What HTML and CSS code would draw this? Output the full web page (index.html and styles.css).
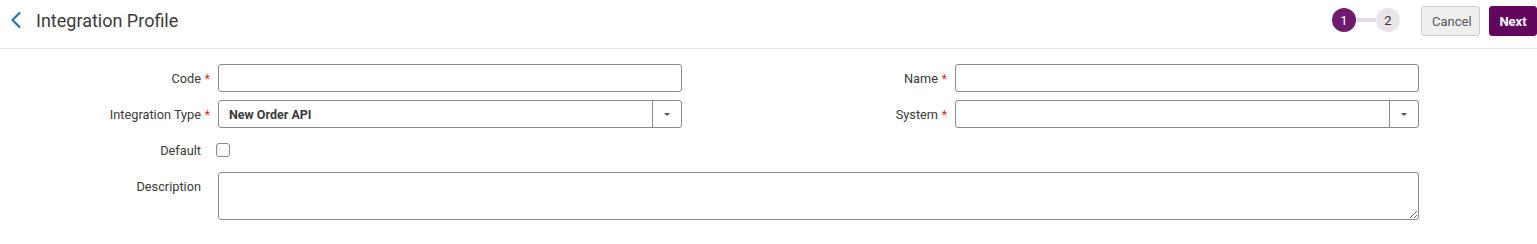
FILE: index.html
```html
<!DOCTYPE html>
<html lang="en">
<head>
<meta charset="utf-8">
<title>Integration Profile</title>
<link rel="stylesheet" href="styles.css">
</head>
<body>
<header class="topbar">
  <div class="title-group">
    <button class="back-btn" aria-label="Back">
      <svg width="12" height="18" viewBox="0 0 12 18"><path d="M9.5 2 L2.5 9 L9.5 16" fill="none" stroke="#1f78b4" stroke-width="2.2" stroke-linecap="round" stroke-linejoin="round"/></svg>
    </button>
    <h1 class="title">Integration Profile</h1>
  </div>
  <div class="actions">
    <div class="stepper">
      <span class="step step-active">1</span>
      <span class="step-line"></span>
      <span class="step">2</span>
    </div>
    <button class="btn btn-cancel">Cancel</button>
    <button class="btn btn-next">Next</button>
  </div>
</header>
<form class="form">
  <label class="lbl">Code<span class="req">*</span></label>
  <input class="inp" type="text">
  <label class="lbl">Name<span class="req">*</span></label>
  <input class="inp" type="text">

  <label class="lbl">Integration Type<span class="req">*</span></label>
  <div class="select"><span class="select-val">New Order API</span><span class="select-btn"><span class="caret"></span></span></div>
  <label class="lbl">System<span class="req">*</span></label>
  <div class="select"><span class="select-val"></span><span class="select-btn"><span class="caret"></span></span></div>

  <label class="lbl">Default<span class="req"></span></label>
  <div class="check-cell"><span class="checkbox"></span></div>
  <div class="spacer"></div>
  <div class="spacer"></div>

  <label class="lbl lbl-top">Description<span class="req"></span></label>
  <textarea class="txt"></textarea>
</form>
</body>
</html>
```
FILE: styles.css
```css
* { box-sizing: border-box; }
html, body { margin: 0; padding: 0; background: #fff; }
body { font-family: Roboto, "Noto Sans", Arial, sans-serif; color: #333; width: 1537px; }

.topbar {
  height: 49px;
  border-bottom: 1px solid #e4e4e4;
  display: flex;
  align-items: flex-start;
  justify-content: space-between;
}
.title-group { display: flex; align-items: center; height: 40px; padding-left: 8px; }
.back-btn { border: 0; background: none; padding: 0; width: 16px; height: 20px; display: flex; align-items: center; justify-content: center; cursor: pointer; }
.title { margin: 0 0 0 12px; font-size: 18px; font-weight: 400; color: #3b3b3b; }

.actions { display: flex; align-items: center; height: 42px; }
.stepper { display: flex; align-items: center; margin-right: 21px; margin-top: -2px; }
.step {
  width: 24px; height: 24px; border-radius: 50%;
  background: #e8e4ea; color: #333; font-size: 13px;
  display: flex; align-items: center; justify-content: center;
}
.step-active { background: #6f1b6b; color: #fff; }
.step-line { width: 20px; height: 4px; background: #e2dbe4; }

.btn { height: 30px; border-radius: 3px; font-family: inherit; font-size: 13px; padding: 0 10px; cursor: pointer; }
.btn-cancel { background: #efefef; border: 1px solid #cfcfcf; color: #555; width: 59px; margin-right: 9px; }
.btn-next { background: #63075e; border: 1px solid #63075e; color: #fff; font-weight: 700; width: 48px; padding: 0; }

.form {
  display: grid;
  grid-template-columns: 210px 464px 257px 464px;
  grid-template-rows: 28px 28px 28px 48px;
  column-gap: 8px;
  row-gap: 8px;
  padding-top: 15px;
}
.lbl { display: flex; align-items: center; justify-content: flex-end; font-size: 12.75px; color: #3a3a3a; padding-top: 1px; }
.lbl-top { align-items: flex-start; line-height: 28px; }
.req { display: inline-block; width: 9px; color: #e3262c; font-size: 12px; text-align: right; }

.inp { height: 28px; border: 1px solid #8a8a8a; border-radius: 3px; font-family: inherit; font-size: 13px; padding: 0 10px; }

.select { display: flex; height: 28px; border: 1px solid #8a8a8a; border-radius: 3px; }
.select-val { flex: 1; display: flex; align-items: center; padding-left: 10px; font-size: 12.5px; font-weight: 700; color: #3a3a3a; }
.select-btn { width: 29px; border-left: 1px solid #8a8a8a; display: flex; align-items: center; justify-content: center; }
.caret { width: 0; height: 0; border-left: 3px solid transparent; border-right: 3px solid transparent; border-top: 3px solid #555; }

.check-cell { display: flex; align-items: center; margin-left: -2px; }
.checkbox { width: 14px; height: 14px; border: 1px solid #8a8a8a; border-radius: 3px; background: #fbfbfb; }

.txt { grid-column: 2 / 5; height: 48px; border: 1px solid #8a8a8a; border-radius: 3px; font-family: inherit; font-size: 13px; resize: both; }
```
